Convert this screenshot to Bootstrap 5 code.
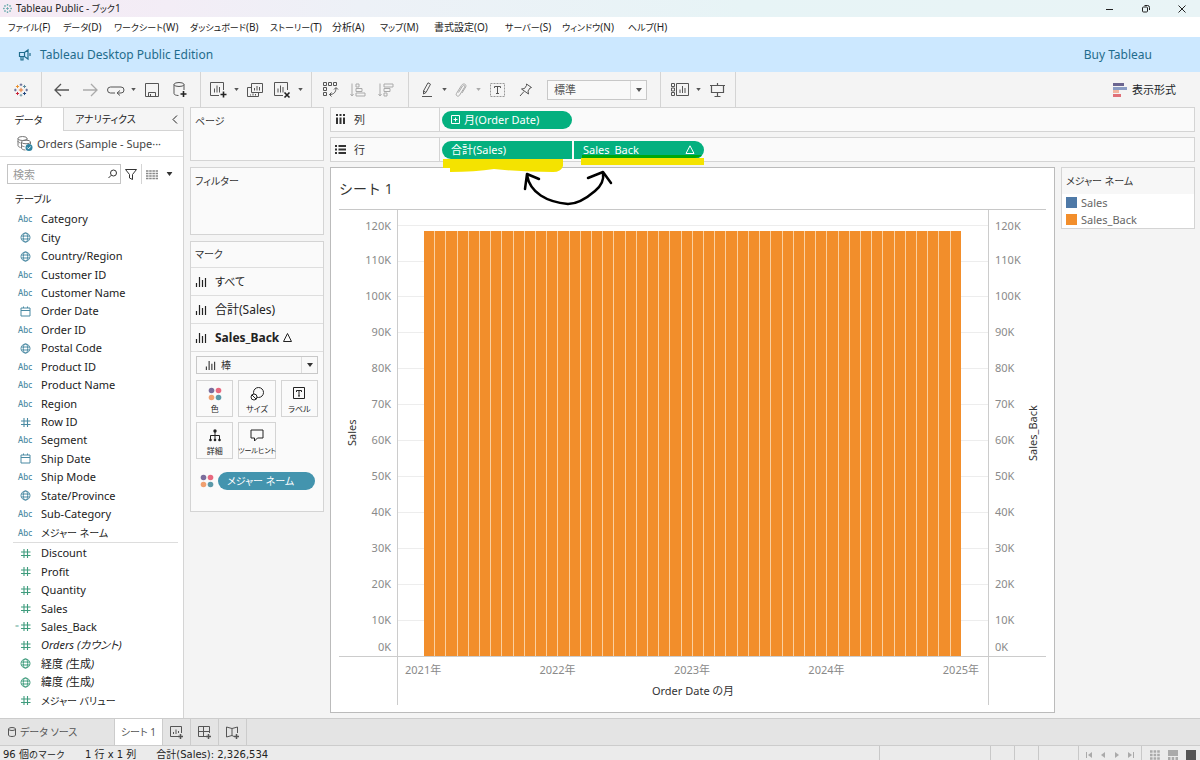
<!DOCTYPE html>
<html lang="ja">
<head>
<meta charset="utf-8">
<meta name="viewport" content="width=device-width, initial-scale=1">
<title>Tableau Public - ブック1</title>
<link rel="stylesheet" href="https://cdn.jsdelivr.net/npm/bootstrap@5.3.0/dist/css/bootstrap.min.css">
<style>
  :root { --line:#d4d4d4; --ui:"Noto Sans","Noto Sans CJK JP",sans-serif; }
  body { font:11px/16px var(--ui); color:#333; background:#f4f4f4; font-feature-settings:"palt"; }
  svg { display:block; fill:none; flex:none; overflow:visible; }
  svg:not([stroke]) { stroke:currentColor; }
  button, select, input { font:inherit; color:inherit; }
  button { border:0; background:none; padding:0; }
  a { color:inherit; text-decoration:none; }
  ul { list-style:none; margin:0; padding:0; }
  .k9 { font-size:9px; } .k10 { font-size:10px; } .k12 { font-size:12px; }
  .g6 { margin-left:6px; } .g13 { margin-left:13px; }

  .titlebar { height:17px; font-size:10px; color:#222; background:linear-gradient(90deg,#f5eaf4 0,#f3edf6 14%,#edf1f7 30%,#e7f4f6 62%,#e9f4f6 100%); }
  .titlebar button { width:36px; display:grid; place-items:center; }
  .titlebar .mark-logo { color:#6aa; margin-left:3px; }
  .menubar { height:20px; font-size:10px; color:#222; }
  .menubar a { white-space:nowrap; }
  .banner { height:35px; background:#cce8ff; color:#1f6c8c; font-size:12px; }
  .toolbar { height:35px; color:#555; }
  .toolbar button { display:grid; place-items:center; height:28px; }
  .home { width:41px; }
  .t28 { width:28px; } .t26 { width:26px; } .t24 { width:24px; } .t10 { width:10px; }
  .sep { width:1px; align-self:stretch; background:var(--line); }
  .toolbar .off { color:#aaa; }
  .pick { position:relative; }
  .pick select { appearance:none; width:100%; border:1px solid #c8c8c8; border-radius:0; background:#f9f9f9; display:block; padding:0 6px; }
  .pick svg { position:absolute; pointer-events:none; }
  .pick .arrow { right:5px; top:50%; margin-top:-2px; }
  .pick::after { content:""; position:absolute; right:16px; top:1px; bottom:1px; width:1px; background:#ddd; }
  .scalepick { width:100px; }
  .scalepick select { height:20px; }

  main, .workrow { min-height:0; }
  .datapane { width:184px; background:#fff; border-right:1px solid var(--line); }
  .panetabs { height:24px; color:#222; border-top:1px solid var(--line); }
  .panetabs .tab-on { width:63px; padding-right:6px; }
  .panetabs .tab-off { background:#f5f5f5; border-left:1px solid var(--line); border-bottom:1px solid var(--line); padding:0 5px 0 11px; }
  .source { height:26px; border-bottom:1px solid #e0e0e0; color:#444; padding-left:17px; }
  .finder { padding:7px 10px 0 7px; }
  .finder input { width:100%; height:20px; border:1px solid #c4c4c4; padding:0 5px; display:block; }
  .finder input::placeholder { color:#999; }
  .tables-head { padding:7px 15px 3px; color:#222; }
  .dims { flex:18 1 0; border-bottom:1px solid #ddd; margin:0 5px 0 13px; }
  .meas { flex:9 1 0; margin:1px 5px 8px 13px; }
  .fields li { flex:1 1 0; min-height:0; display:flex; align-items:center; color:#222; white-space:nowrap; }
  .fields i { width:28px; display:grid; justify-items:start; padding-left:7px; color:#4b8aa3; font-style:normal; position:relative; }
  .fields .abc { font-size:8px; font-weight:500; padding-left:5px; }
  .meas i { color:#3f9c7d; }
  .fields .calc::before { content:"="; position:absolute; left:2px; top:-4px; font-size:7px; line-height:18px; color:#6a9; }

  .cardscol { width:134px; gap:6px; margin:0 6px; }
  .pane { background:#fafafa; border:1px solid var(--line); }
  .pane-head { line-height:18px; padding:4px; }
  .pages { height:54px; } .filters { height:68px; } .marks { height:271px; }
  .marks .pane-head { height:25px; line-height:17px; }
  .markrow { height:28px; border-top:1px solid #dedede; color:#222; width:100%; text-align:left; }
  .markrow.last { border-bottom:1px solid #dedede; height:29px; }
  .marks .pick select { height:18px; font-size:10px; padding-left:24px; }
  .marks .pick .glyph { left:9px; top:4px; }
  .markbody { padding:4px 5px 5px; }
  .tiles { display:grid; grid-template-columns:repeat(3,minmax(0,1fr)); gap:5px; margin-top:6px; }
  .tiles button { height:37px; border:1px solid var(--line); display:flex; flex-direction:column; align-items:center; justify-content:space-between; padding:6px 0 0; font-size:8px; line-height:14px; white-space:nowrap; color:#222; }
  .tiles .tip { font-size:7px; }
  .encoding { margin-top:13px; }
  .pill { height:18px; color:#fff; display:flex; align-items:center; padding:0 9px; width:130px; background:#04b07f; margin-left:2px; }
  .pill.blue { width:97px; background:#4394ae; font-size:10px; margin-left:0; }

  .work { gap:5px; min-width:0; padding-right:5px; }
  .shelf { height:25px; }
  .shelf-label { width:109px; border-right:1px solid var(--line); }
  .scribble { position:absolute; left:0; top:0; pointer-events:none; }
  .workrow { gap:6px; padding-bottom:5px; }
  .sheet { background:#fff; border:1px solid #bbb; padding:0 8px 7px; }
  .sheet h1 { font:14px/41px "Open Sans","Noto Sans CJK JP",sans-serif; margin:0; color:#333; }
  .viz { display:grid; grid-template-columns:58px minmax(0,1fr) 58px; grid-template-rows:minmax(0,1fr) 48px; border-top:1px solid #c8c8c8; flex:1; min-height:0; color:#8a8a8a; }
  .axis { display:flex; min-height:0; min-width:0; }
  .axis .cap { writing-mode:vertical-rl; transform:rotate(180deg); text-align:center; color:#333; width:26px; line-height:26px; }
  .ticks { display:flex; flex-direction:column; flex:1; min-width:0; padding-left:6px; }
  .tickl { align-items:flex-end; padding:0 6px 0 0; }
  .ticks span { flex:36 1 0; min-height:0; display:flex; align-items:center; }
  .ticks span:first-child { flex-grow:32; }
  .ticks span:last-child { flex-grow:18; }
  .axis, .plot { border-bottom:1px solid #ccc; }
  .edge { border-left:1px solid #ccc; }
  .plot { display:grid; grid-template:minmax(0,1fr)/minmax(0,1fr); }
  .plot > * { grid-area:1/1; }
  .rules { display:flex; flex-direction:column; min-height:0; }
  .rules i { flex:36 1 0; border-top:1px solid #ededed; }
  .rules i:first-child { flex-grow:15; border:0; }
  .bars { display:flex; align-items:flex-end; padding:0 27px 0 26px; min-height:0; }
  .bars i { flex:1 1 0; background:#f28e2b; border-right:1px solid #fbd0a0; }
  .bars i:last-child { border:0; }
  .foot .years { padding:5px 9px 0 7px; }
  .foot .axis-name { padding-top:5px; color:#333; }
  .legend-card { width:134px; color:#666; }
  .legend-card .pane-head { background:#f7f7f7; height:26px; color:#333; }
  .legend-card .key { height:17px; }
  .swatch { width:11px; height:11px; }

  .sheettabs { height:27px; background:#e4e4e4; border-top:1px solid #ccc; color:#555; font-size:10px; }
  .sheettabs button { border-right:1px solid #ccc; display:flex; align-items:center; justify-content:center; }
  .tabsrc { width:115px; } .tabon { width:48px; }
  .status { height:15px; background:#ebebeb; border-top:1px solid #ccc; color:#222; font:10px/18px "DejaVu Sans","Noto Sans CJK JP",sans-serif; }
  .status .cell { border-left:1px solid #c8c8c8; }
  .status button { display:grid; place-items:center; }
  .stat-text { padding-left:3px; gap:20px; }
  .c111 { width:111px; } .c40 { width:40px; }
  .cnav { width:63px; justify-content:space-between; padding:3px 7px 0; color:#aaa; }
  .cview { width:59px; padding-top:3px; }
</style>
</head>
<body class="vh-100 d-flex flex-column overflow-hidden">

<svg width="0" height="0" class="position-absolute" aria-hidden="true">
  <symbol id="bars" viewBox="0 0 12 12"><path d="M1.5 11V7M4.5 11V1M7.5 11V4M10.5 11V2" stroke-width="1.2"/></symbol>
  <symbol id="caret" viewBox="0 0 6 4"><path d="M0 0h6L3 4z" fill="currentColor" stroke="none"/></symbol>
  <symbol id="globe" viewBox="0 0 11 11"><circle cx="5.5" cy="5.5" r="4.5"/><ellipse cx="5.5" cy="5.5" rx="2.2" ry="4.5"/><path d="M1.500 4h8M1.500 7h8"/></symbol>
  <symbol id="hash" viewBox="0 0 11 11"><path d="M4 1v9M7.500 1v9M1 4h9.500M1 7.500h9.500" stroke-width="1.1"/></symbol>
  <symbol id="date" viewBox="0 0 11 11"><path d="M1 2h9v8H1zM1 4.500h9M3.500.500V2M7.500.500V2"/></symbol>
  <symbol id="dots4" viewBox="0 0 14 14"><g stroke="none"><circle cx="3.500" cy="3.500" r="2.800" fill="#7b6d9c"/><circle cx="10.500" cy="3.500" r="2.800" fill="#e8697f"/><circle cx="3.500" cy="10.500" r="2.800" fill="#f0a070"/><circle cx="10.500" cy="10.500" r="2.800" fill="#5b98a8"/></g></symbol>
  <symbol id="logo" viewBox="0 0 16 16"><g stroke-width="1.100"><path stroke="#e8762c" d="M8 5.500v5M5.500 8h5"/><path stroke="#5b6591" d="M8 .500v3M6.500 2h3M1.500 6.500v3M0 8h3"/><path stroke="#7199a6" d="M8 12.500v3M6.500 14h3"/><path stroke="#5b6591" d="M14.500 6.500v3M13 8h3"/><path stroke="#c72035" d="M4 10.200v3.600M2.200 12h3.600"/><path stroke="#eb912c" d="M4 2.200v3.600M2.200 4h3.600"/><path stroke="#59879b" d="M12 2.200v3.600M10.200 4h3.600"/><path stroke="#1f457e" d="M12 10.200v3.600M10.200 12h3.600"/></g></symbol>
</svg>

<header class="titlebar d-flex align-items-center">
  <svg class="mark-logo" width="9" height="9" viewBox="0 0 16 16" stroke-width="1.500"><path d="M8 5.500v5M5.500 8h5M8 0v3M6.500 1.500h3M8 13v3M6.500 14.500h3M1.500 6.500v3M0 8h3M14.500 6.500v3M13 8h3M3.500 2v3M2 3.500h3M12.500 2v3M11 3.500h3M3.500 11v3M2 12.500h3M12.500 11v3M11 12.500h3"/></svg>
  <span class="ps-1">Tableau Public - <span class="k9">ブック</span>1</span>
  <div class="ms-auto d-flex">
    <button aria-label="最小化"><svg width="8" height="8"><path d="M0 4.500h7"/></svg></button>
    <button aria-label="元に戻す"><svg width="8" height="8"><rect x=".5" y="2" width="5" height="5" rx="1"/><path d="M2.500.500h3a2 2 0 0 1 2 2V5"/></svg></button>
    <button aria-label="閉じる"><svg width="8" height="8"><path d="M.5.5l7 7M7.500.500l-7 7"/></svg></button>
  </div>
</header>

<nav class="menubar bg-white d-flex align-items-center px-2" id="menu"></nav>

<section class="banner d-flex align-items-center">
  <svg class="ms-3" width="16" height="14" viewBox="0 0 16 14" stroke-width="1.200"><path d="M3.500 4.500h5L12 2v9L8.500 8.500h-5zM5 8.500v3.500h2V8.500M8.500 4.500v4M14 5v3M3.500 4.500v4"/></svg>
  <span class="ms-2">Tableau Desktop Public Edition</span>
  <a href="#" class="ms-auto me-5">Buy Tableau</a>
</section>

<div class="toolbar d-flex align-items-center">
  <button class="home" aria-label="スタート"><svg width="14" height="14" viewBox="0 0 16 16"><use href="#logo"/></svg></button>
  <span class="sep"></span>
  <button class="t28 g6" aria-label="戻る"><svg width="16" height="14" stroke-width="1.300"><path d="M1 7h14M7 1L1 7l6 6"/></svg></button>
  <button class="t28 off" aria-label="進む"><svg width="16" height="14" stroke-width="1.300"><path d="M1 7h14M9 1l6 6-6 6"/></svg></button>
  <button class="t24" aria-label="やり直す"><svg width="18" height="10"><path d="M8 8H3.500a3 3 0 0 1 0-6H14a3 3 0 0 1 0 6h-3M13 5.500L10 8l3 2.500"/></svg></button>
  <button class="t10" aria-label="やり直すメニュー"><svg width="5" height="3"><use href="#caret"/></svg></button>
  <button class="t28" aria-label="保存"><svg width="14" height="14"><path d="M.5.5h13v13H.500zM3.500 13.500v-4h7v4M5.500 11v2"/></svg></button>
  <button class="t28" aria-label="新しいデータソース"><svg width="14" height="16"><ellipse cx="6" cy="2.500" rx="5" ry="2"/><path d="M1 2.500v9c0 1.200 2 2 4.500 2M11 2.500V8"/><path d="M10.500 9v6M7.500 12h6" stroke="#222" stroke-width="1.600"/></svg></button>
  <span class="sep g6"></span>
  <button class="t26 ms-1" aria-label="新しいワークシート"><svg width="17" height="16"><path d="M9 13.500H.500V.500h13V8M4.500 10.500v-4M7 10.500v-7M9.500 10.500V5"/><path d="M13.500 9.500v6M10.500 12.500h6" stroke="#222" stroke-width="1.600"/></svg></button>
  <button class="t10" aria-label="ワークシートメニュー"><svg width="5" height="3"><use href="#caret"/></svg></button>
  <button class="t28" aria-label="複製"><svg width="16" height="14"><path d="M4.500.500h11v9h-11zM4 4.500H.500v9h11V10M7.500 7.500V5M10 7.500V3M12.500 7.500V4M3.500 11.500v1M6 10.500v2M8.500 11v1.500"/></svg></button>
  <button class="t26" aria-label="クリア"><svg width="17" height="16"><path d="M9 13.500H.500V.500h13V8M4 10.500v-4M6.500 10.500v-7M9 10.500V5"/><path d="M10.500 10.500l5 5M15.500 10.500l-5 5" stroke="#222" stroke-width="1.600"/></svg></button>
  <button class="t10" aria-label="クリアメニュー"><svg width="5" height="3"><use href="#caret"/></svg></button>
  <span class="sep g6"></span>
  <button class="t28 ms-1" aria-label="行と列の入れ替え"><svg width="15" height="15"><path d="M.5.5h3v3h-3zM5.500.500h3v3h-3zM10.500.500h3v3h-3zM.5 5.500h3v3h-3zM.5 10.500h3v3h-3zM13 6c0 4-2 6.500-6.500 6.500M11 7.500l2-2 2 2M8.500 10.500l-2 2 2 2"/></svg></button>
  <button class="t28 off" aria-label="昇順"><svg width="16" height="14"><path d="M2 .5v12M.5 11L2 13l1.500-2M6 1h3v3H6zM6 5.500h6v3H6zM6 10h9v3H6z"/></svg></button>
  <button class="t28 off" aria-label="降順"><svg width="16" height="14"><path d="M2 .5v12M.5 11L2 13l1.500-2M6 1h9v3H6zM6 5.500h6v3H6zM6 10h3v3H6z"/></svg></button>
  <span class="sep ms-2"></span>
  <button class="t24 g6" aria-label="ハイライト"><svg width="12" height="15"><path d="M2.500 9L7 .8l2.500 1.400L5 10.500 2.500 12zM2.500 9L5 10.500M1 14.500h10"/></svg></button>
  <button class="t10" aria-label="ハイライトメニュー"><svg width="5" height="3"><use href="#caret"/></svg></button>
  <button class="t24 off" aria-label="グループ"><svg width="12" height="14"><path d="M3.500 9.500l4-6.500c1-1.500 3-.5 2 1.300l-5 8c-1.300 2-4.300.3-3-1.900l5-8C8-.3 12 1 10.700 4L7 10"/></svg></button>
  <button class="t10 off" aria-label="グループメニュー"><svg width="5" height="3"><use href="#caret"/></svg></button>
  <button class="t28" aria-label="ラベル"><svg width="15" height="14"><path d="M.5.500h14v13H.500z" stroke-dasharray="2 1" stroke="#999"/><path d="M4.500 5V3.500h6V5M7.500 3.500v7M6 10.500h3"/></svg></button>
  <button class="t28" aria-label="固定"><svg width="13" height="14"><path d="M7.500 1l5 3.500-1.500.500-2 3 .5 3-7-5 3-.5 2-3zM5 8.500L1 13"/></svg></button>
  <div class="pick scalepick ms-2"><select aria-label="適合"><option>標準</option></select><svg class="arrow" width="6" height="4"><use href="#caret"/></svg></div>
  <span class="sep g13"></span>
  <button class="t26 g6" aria-label="カードの表示"><svg width="18" height="13"><path d="M5.500.500h12v12h-12zM.5.500h3v3h-3zM.5 5h3v3h-3zM.5 9.500h3v3h-3zM9 10V6.500M11.500 10V3M14 10V5"/></svg></button>
  <button class="t10" aria-label="カードメニュー"><svg width="5" height="3"><use href="#caret"/></svg></button>
  <button class="t28" aria-label="プレゼンテーション"><svg width="15" height="14" stroke-width="1.200"><path d="M0 2.500h15M1.500 2.500v7h12v-7M7.500 0v2M7.500 9.500v4M4.500 13.500h6"/></svg></button>
  <span class="sep ms-1"></span>
  <button class="ms-auto me-4 d-flex align-items-center gap-1 text-dark"><svg width="15" height="14" stroke="none"><path fill="#6b6590" d="M0 0h11v3H0z"/><path fill="#8a9cc4" d="M0 4h14v3H0z"/><path fill="#f2b5a0" d="M0 7h6v3H0z"/><path fill="#e07078" d="M0 11h8v3H0z"/></svg>表示形式</button>
</div>

<main class="d-flex flex-fill">
  <aside class="datapane d-flex flex-column flex-shrink-0">
    <div class="panetabs d-flex">
      <button class="tab-on k10">データ</button>
      <button class="tab-off flex-fill d-flex align-items-center justify-content-between k10">アナリティクス<svg width="6" height="9"><path d="M5 .5L1 4.500l4 4"/></svg></button>
    </div>
    <div class="source d-flex align-items-center gap-1">
      <svg width="16" height="15" viewBox="0 0 16 15" stroke="#777"><ellipse cx="5.500" cy="2.500" rx="4.500" ry="2"/><path d="M1 2.500v7c0 1 1 1.500 2.500 2M1 5c0 1 1 1.500 2.500 2M10 2.500V4"/><path d="M4.500 6v6c0 1 1.500 2 4 2M4.500 9c0 1 1.500 1.500 3 1.700"/><ellipse cx="9" cy="6" rx="4.500" ry="1.800"/><path d="M13.500 6v2"/><circle cx="12" cy="11.500" r="3.500" fill="#2f83a0" stroke="none"/><path d="M10.300 11.500l1.300 1.300 2-2.300" stroke="#fff"/></svg>
      <span>Orders (Sample - Supe···</span>
    </div>
    <div class="finder d-flex align-items-center gap-1">
      <label class="position-relative flex-fill"><input type="search" placeholder="検索" aria-label="検索"><svg class="position-absolute end-0 top-50 translate-middle-y me-1" width="9" height="9"><circle cx="5.500" cy="3.500" r="3"/><path d="M3.300 5.700L.5 8.500"/></svg></label>
      <svg width="12" height="11"><path d="M.5.500h11L7.500 5.500v5l-3-1.500V5.500z"/></svg>
      <span class="sep"></span>
      <svg width="12" height="9" stroke="#888" stroke-width="1.500"><path d="M0 1h12M0 3.500h12M0 6h12M0 8.500h12" stroke-dasharray="2.500 .7"/></svg>
      <svg class="ms-1" width="7" height="4" viewBox="0 0 6 4"><use href="#caret"/></svg>
    </div>
    <div class="tables-head k10">テーブル</div>
    <ul class="fields dims d-flex flex-column" id="dims"></ul>
    <ul class="fields meas d-flex flex-column" id="meas"></ul>
  </aside>

  <section class="cardscol d-flex flex-column flex-shrink-0">
    <div class="pane pages"><div class="pane-head k10">ページ</div></div>
    <div class="pane filters"><div class="pane-head k10">フィルター</div></div>
    <div class="pane marks">
      <div class="pane-head k10">マーク</div>
      <button class="markrow d-flex align-items-center ps-1 gap-2"><svg width="12" height="12"><use href="#bars"/></svg>すべて</button>
      <button class="markrow k12 d-flex align-items-center ps-1 gap-2"><svg width="12" height="12"><use href="#bars"/></svg>合計(Sales)</button>
      <button class="markrow last k12 d-flex align-items-center ps-1 gap-2 fw-bold"><svg width="12" height="12"><use href="#bars"/></svg><span class="d-flex align-items-center gap-1">Sales_Back<svg width="9" height="9"><path d="M4.500.500l4 8h-8z"/></svg></span></button>
      <div class="markbody">
        <div class="pick"><select aria-label="マークの種類"><option>棒</option></select><svg class="glyph" width="11" height="11"><use href="#bars"/></svg><svg class="arrow" width="6" height="4"><use href="#caret"/></svg></div>
        <div class="tiles">
          <button><svg width="14" height="14"><use href="#dots4"/></svg>色</button>
          <button><svg width="14" height="14"><circle cx="8.500" cy="5.500" r="5"/><circle cx="4" cy="10" r="3" fill="#fafafa"/><path d="M2 8l4 4"/></svg>サイズ</button>
          <button><svg width="12" height="12"><path d="M.5.500h11v11H.500zM3.500 5V3.500h5V5M6 3.500v5.500M5 9h2"/></svg>ラベル</button>
          <button><svg width="12" height="13"><path d="M6 3v7M1.500 10V6.500h9V10"/><g fill="currentColor" stroke="none"><circle cx="6" cy="2" r="1.700"/><circle cx="1.500" cy="11" r="1.300"/><circle cx="6" cy="11" r="1.300"/><circle cx="10.500" cy="11" r="1.300"/></g></svg>詳細</button>
          <button class="tip"><svg width="14" height="13"><path d="M1 1h12v8H7.500l-3 3V9H1z"/></svg>ツールヒント</button>
        </div>
        <div class="encoding d-flex align-items-center gap-1 ps-1"><svg width="14" height="14"><use href="#dots4"/></svg><span class="pill blue rounded-pill">メジャー ネーム</span></div>
      </div>
    </div>
  </section>

  <section class="work flex-fill d-flex flex-column position-relative">
    <div class="pane shelf d-flex align-items-center">
      <div class="shelf-label d-flex align-items-center align-self-stretch gap-2 ps-1"><svg width="11" height="11" stroke-width="2"><path d="M2 0v2M2 3.500V10M5.500 0v2M5.500 3.500V10M9 0v2M9 3.500V10"/></svg>列</div>
      <span class="pill rounded-pill"><svg class="me-1" width="9" height="9"><path d="M.5.500h8v8h-8zM4.500 2.500v4M2.500 4.500h4"/></svg>月(Order Date)</span>
    </div>
    <div class="pane shelf d-flex align-items-center">
      <div class="shelf-label d-flex align-items-center align-self-stretch gap-2 ps-1"><svg width="11" height="10" stroke-width="2"><path d="M0 1h2M3.500 1H11M0 4.500h2M3.500 4.500H11M0 8h2M3.500 8H11"/></svg>行</div>
      <span class="pill rounded-start-pill">合計(Sales)</span>
      <span class="pill rounded-end-pill justify-content-between">Sales_Back<svg width="10" height="9"><path d="M5 .8l4 7.700H1z"/></svg></span>
    </div>
    <div class="d-flex flex-fill workrow">
      <article class="sheet flex-fill d-flex flex-column">
        <h1>シート 1</h1>
        <div class="viz">
          <div class="axis"><span class="cap">Sales</span><div class="ticks tickl"></div></div>
          <div class="plot edge"><div class="rules"></div><div class="bars"></div></div>
          <div class="axis edge"><div class="ticks"></div><span class="cap">Sales_Back</span></div>
          <div></div>
          <div class="foot edge">
            <div class="years d-flex justify-content-between"><span>2021年</span><span>2022年</span><span>2023年</span><span>2024年</span><span>2025年</span></div>
            <div class="axis-name text-center">Order Date の月</div>
          </div>
          <div class="edge"></div>
        </div>
      </article>
      <aside class="flex-shrink-0">
        <div class="pane legend-card bg-white">
          <header class="pane-head k10">メジャー ネーム</header>
          <div class="key d-flex align-items-center gap-1 ps-1"><span class="swatch" style="background:#4e79a7"></span>Sales</div>
          <div class="key d-flex align-items-center gap-1 ps-1"><span class="swatch" style="background:#f28e2b"></span>Sales_Back</div>
        </div>
      </aside>
    </div>
    <svg class="scribble" width="400" height="110" aria-hidden="true">
      <path d="M113 52H233V59Q231 65 223 65Q192 65 164 62Q145 65 120 65V61H113z" fill="#f4e300" stroke="none"/>
      <path d="M251 51H374V58H251z" fill="#f4e300" stroke="none"/>
      <path d="M252 48H372Q369 51 365 51H252z" fill="#00a80a" stroke="none"/>
      <g stroke="#000" stroke-width="2.500" stroke-linecap="round" stroke-linejoin="round"><path d="M197 68C200 86 217 95 238 97C249 97 258 90 265 84C271 79 274 72 273 66M195 82L197 67L209 72M258 71L273 65L281 76"/></g>
    </svg>
  </section>
</main>

<nav class="sheettabs d-flex flex-shrink-0">
  <button class="tabsrc justify-content-start ps-2 gap-1"><svg width="8" height="10"><ellipse cx="4" cy="2" rx="3.500" ry="1.500"/><path d="M.5 2v6c0 2 7 2 7 0V2"/></svg>データ ソース</button>
  <button class="tabon bg-white">シート 1</button>
  <button class="t28" aria-label="新しいワークシート"><svg width="13" height="13"><path d="M8 10.500H.500V.500h11V7M3.500 8V6M6 8V3.500M8.500 7V5"/><path d="M10.500 8v5M8 10.500h5" stroke-width="1.500"/></svg></button>
  <button class="t28" aria-label="新しいダッシュボード"><svg width="13" height="13"><path d="M8 10.500H.500V.500h11V7M5.500.500v10M.5 5.500h11"/><path d="M10.500 8v5M8 10.500h5" stroke-width="1.500"/></svg></button>
  <button class="t28" aria-label="新しいストーリー"><svg width="13" height="13"><path d="M8 10.500L6 9.500.5 11V1L6 2.500 11.500 1v6M6 2.500v7"/><path d="M10.500 8v5M8 10.500h5" stroke-width="1.500"/></svg></button>
</nav>
<footer class="status d-flex flex-shrink-0">
  <div class="d-flex flex-fill stat-text"><span>96 個<span class="k9">のマーク</span></span><span>1 行 x 1 列</span><span>合計(Sales): 2,326,534</span></div>
  <span class="cell c111"></span><span class="cell t24"></span><span class="cell t24"></span><span class="cell c40"></span>
  <div class="cell d-flex align-items-center cnav">
    <button aria-label="最初"><svg width="6" height="6"><path d="M.5 0v6"/><path d="M6 0v6L2 3z" fill="currentColor" stroke="none"/></svg></button>
    <button aria-label="前"><svg width="6" height="6"><path d="M5 0v6L1 3z" fill="currentColor" stroke="none"/></svg></button>
    <button aria-label="次"><svg width="6" height="6"><path d="M1 0v6l4-3z" fill="currentColor" stroke="none"/></svg></button>
    <button aria-label="最後"><svg width="6" height="6"><path d="M0 0v6l4-3z" fill="currentColor" stroke="none"/><path d="M5.500 0v6"/></svg></button>
  </div>
  <div class="cell d-flex align-items-center justify-content-between ps-2 pe-1 cview">
    <button aria-label="グリッド"><svg width="10" height="10" stroke="#aaa" stroke-width="2.500"><path d="M0 1.500h10M0 5h10M0 8.500h10" stroke-dasharray="2.600 1"/></svg></button>
    <button aria-label="フィルムストリップ"><svg width="10" height="10" stroke="none"><path d="M0 0h10v6H0zM0 7h2.500v3H0zM3.700 7h2.500v3H3.700zM7.500 7H10v3H7.500z" fill="#aaa"/></svg></button>
    <button aria-label="タブ"><svg width="10" height="10" stroke="none"><path d="M0 0h10v10H0z" fill="#555"/></svg></button>
  </div>
</footer>

<script src="https://cdn.jsdelivr.net/npm/bootstrap@5.3.0/dist/js/bootstrap.bundle.min.js"></script>
<script>
  // Menu entries with their column widths; kana runs are set one step smaller.
  const menu = [["ファイル(F)",55],["データ(D)",51],["ワークシート(W)",76],["ダッシュボード(B)",80],["ストーリー(T)",62],["分析(A)",48],["マップ(M)",54],["書式設定(O)",71],["サーバー(S)",57],["ウィンドウ(N)",66],["ヘルプ(H)",50]];
  const kana = t => t.replace(/[ァ-ー]+/g, m => `<span class="k9">${m}</span>`);
  document.getElementById('menu').innerHTML = menu.map(([t,w]) => `<a href="#" style="width:${w}px">${kana(t)}</a>`).join('');

  const icon = k => k === 'a' ? '<i class="abc">Abc</i>' :
    `<i class="${k === 'c' ? 'calc' : ''}"><svg width="11" height="11"><use href="#${{g:'globe',h:'hash',c:'hash',d:'date'}[k]}"/></svg></i>`;
  const fill = (id, rows) => document.getElementById(id).innerHTML =
    rows.map(([k,t,c='']) => `<li>${icon(k)}<span class="${c}">${t}</span></li>`).join('');
  fill('dims', [['a','Category'],['g','City'],['g','Country/Region'],['a','Customer ID'],['a','Customer Name'],['d','Order Date'],['a','Order ID'],['g','Postal Code'],['a','Product ID'],['a','Product Name'],['a','Region'],['h','Row ID'],['a','Segment'],['d','Ship Date'],['a','Ship Mode'],['g','State/Province'],['a','Sub-Category'],['a','メジャー ネーム','k10']]);
  fill('meas', [['h','Discount'],['h','Profit'],['h','Quantity'],['h','Sales'],['c','Sales_Back'],['h','Orders (カウント)','fst-italic'],['g','経度 <em>(</em>生成<em>)</em>'],['g','緯度 <em>(</em>生成<em>)</em>'],['h','メジャー バリュー','k10']]);

  const ticks = Array.from({length:13}, (_, i) => `${(12 - i) * 10}K`);
  document.querySelectorAll('.ticks').forEach(el => el.innerHTML = ticks.map(t => `<span>${t}</span>`).join(''));
  document.querySelector('.rules').innerHTML = '<i></i>'.repeat(13);
  document.querySelector('.bars').innerHTML = '<i style="height:95.3%"></i>'.repeat(48);
</script>
</body>
</html>
